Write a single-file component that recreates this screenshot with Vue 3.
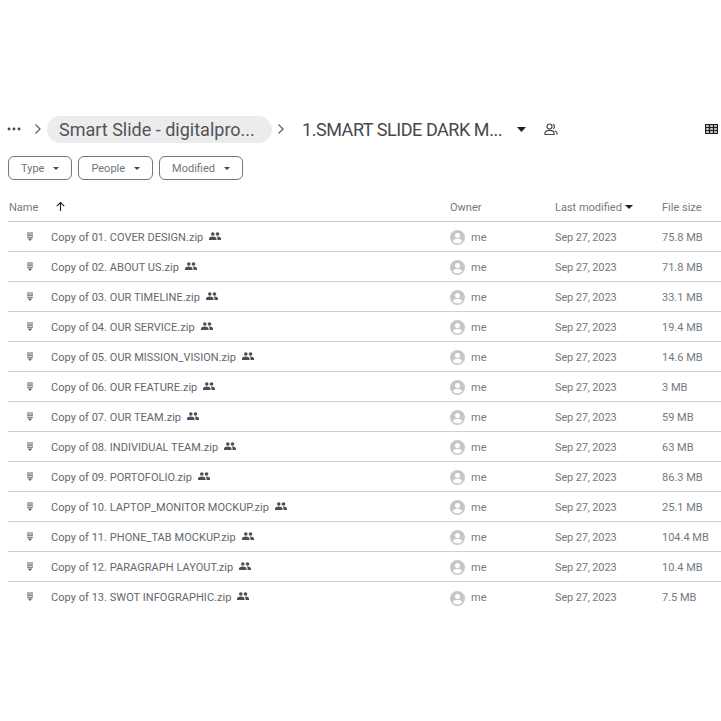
<script setup>
const rows = [
  ['Copy of 01. COVER DESIGN.zip', '75.8 MB'],
  ['Copy of 02. ABOUT US.zip', '71.8 MB'],
  ['Copy of 03. OUR TIMELINE.zip', '33.1 MB'],
  ['Copy of 04. OUR SERVICE.zip', '19.4 MB'],
  ['Copy of 05. OUR MISSION_VISION.zip', '14.6 MB'],
  ['Copy of 06. OUR FEATURE.zip', '3 MB'],
  ['Copy of 07. OUR TEAM.zip', '59 MB'],
  ['Copy of 08. INDIVIDUAL TEAM.zip', '63 MB'],
  ['Copy of 09. PORTOFOLIO.zip', '86.3 MB'],
  ['Copy of 10. LAPTOP_MONITOR MOCKUP.zip', '25.1 MB'],
  ['Copy of 11. PHONE_TAB MOCKUP.zip', '104.4 MB'],
  ['Copy of 12. PARAGRAPH LAYOUT.zip', '10.4 MB'],
  ['Copy of 13. SWOT INFOGRAPHIC.zip', '7.5 MB'],
]
const filters = ['Type', 'People', 'Modified']
</script>

<template>
  <div class="page">
    <div class="crumbs">
      <svg class="dots" width="14" height="4" viewBox="0 0 14 4"><circle cx="2" cy="2" r="1.4"/><circle cx="7" cy="2" r="1.4"/><circle cx="12" cy="2" r="1.4"/></svg>
      <svg class="chev first" width="8" height="12" viewBox="0 0 8 12"><path d="M1.5 1.5 6 6l-4.500 4.500"/></svg>
      <span class="pill">Smart Slide - digitalpro...</span>
      <svg class="chev second" width="8" height="12" viewBox="0 0 8 12"><path d="M1.5 1.5 6 6l-4.500 4.500"/></svg>
      <span class="current">1.SMART SLIDE DARK M...</span>
      <svg class="caret big" width="9" height="5" viewBox="0 0 9 5"><path d="M0 0h9L4.500 5z"/></svg>
      <svg class="folder-share" width="14" height="13" viewBox="0 0 14 13"><circle cx="5.500" cy="3.500" r="2.500"/><path d="M1 11.500V10c0-1.600 2-2.700 4.500-2.700S10 8.400 10 10v1.500z"/><path d="M9 1.200a2.500 2.500 0 0 1 0 4.600M11 7.800c1.200.5 2 1.200 2 2.200v1.500"/></svg>
      <svg class="grid-view" width="13" height="10" viewBox="0 0 13 10"><path d="M.5.500h12v9H.5zM.5 3.500h12M.5 6.500h12M4.500.5v9M8.500.5v9"/></svg>
    </div>

    <div class="filters">
      <button v-for="f in filters" :key="f" class="filter">
        <span>{{ f }}</span>
        <svg width="6" height="3" viewBox="0 0 6 3"><path d="M0 0h6L3 3z"/></svg>
      </button>
    </div>

    <div class="row head">
      <div class="name-head">
        <span>Name</span>
        <svg width="11" height="11" viewBox="0 0 11 11"><path d="M5.500 10V1.500M1.800 5.200 5.500 1.500l3.700 3.700"/></svg>
      </div>
      <span>Owner</span>
      <span class="sort">Last modified
        <svg width="8" height="4" viewBox="0 0 8 4"><path d="M0 0h8L4 4z"/></svg>
      </span>
      <span>File size</span>
    </div>

    <div v-for="r in rows" :key="r[0]" class="row item">
      <div class="name-cell">
        <svg class="zip" width="6" height="9" viewBox="0 0 6 9"><path d="M0 .5h6v1.100H0zM0 2.600h6v1.100H0zM0 4.700h6v1.100H0zM.6 6.600h4.800L3 9z"/></svg>
        <span class="fname">{{ r[0] }}</span>
        <svg class="shared" width="12" height="8" viewBox="0 0 12 8"><circle cx="3.800" cy="2" r="1.800"/><circle cx="8.500" cy="2" r="1.800"/><path d="M0 8V6.500C0 5.200 2 4.500 3.800 4.500s3.700.7 3.700 2V8zM8.500 8V6.300c0-.7-.3-1.300-.8-1.700 2-.3 4.300.5 4.300 1.900V8z"/></svg>
      </div>
      <div class="owner">
        <svg width="15" height="15" viewBox="0 0 15 15"><circle class="disc" cx="7.500" cy="7.500" r="7.500"/><circle class="face" cx="7.500" cy="5.600" r="2.500"/><path class="face" d="M2.800 11.200c.8-1.600 2.800-2.400 4.700-2.400s3.900.8 4.700 2.400a6 6 0 0 1-9.400 0z"/></svg>
        <span>me</span>
      </div>
      <span class="date">Sep 27, 2023</span>
      <span>{{ r[1] }}</span>
    </div>
  </div>
</template>

<style scoped>
.page {
  width: 721px;
  height: 721px;
  box-sizing: border-box;
  padding-top: 114px;
  background: #fff;
  font-family: Roboto, "Liberation Sans", sans-serif;
  color: #5f6368;
  overflow: hidden;
}
.crumbs {
  display: flex;
  align-items: center;
  height: 30px;
  padding-left: 7px;
}
.dots { fill: #444746; }
.chev { fill: none; stroke: #5f6368; stroke-width: 1.300; }
.chev.first { margin-left: 13px; }
.chev.second { margin-left: 5px; }
.pill {
  margin-left: 5px;
  height: 27px;
  width: 225px;
  box-sizing: border-box;
  padding-left: 12px;
  border-radius: 14px;
  background: #ececec;
  font-size: 18px;
  line-height: 27px;
  color: #50545a;
  white-space: nowrap;
}
.current {
  margin-left: 17px;
  font-size: 18px;
  letter-spacing: -.45px;
  color: #45494d;
  white-space: nowrap;
}
.caret { fill: #1f1f1f; }
.caret.big { margin-left: 15px; }
.folder-share { margin-left: 18px; fill: none; stroke: #444746; stroke-width: 1.200; }
.grid-view { margin-left: auto; margin-right: 3px; fill: none; stroke: #1f1f1f; stroke-width: 1.300; }
.filters {
  display: flex;
  gap: 6px;
  margin-top: 12px;
  padding-left: 8px;
}
.filter {
  display: flex;
  align-items: center;
  height: 24px;
  box-sizing: border-box;
  padding: 0 12px;
  gap: 9px;
  border: 1px solid #747775;
  border-radius: 6px;
  background: #fff;
  font: 11px Roboto, "Liberation Sans", sans-serif;
  color: #70757a;
}
.filter svg { fill: #444746; }
.row {
  display: grid;
  grid-template-columns: 442px 105px 107px 1fr;
  align-items: center;
  box-sizing: border-box;
  height: 30px;
  padding-top: 1px;
  margin-left: 8px;
  font-size: 11px;
  color: #75797e;
}
.head {
  margin-top: 12px;
  border-bottom: 1px solid #c7c7c7;
}
.name-head { display: flex; align-items: center; gap: 17px; padding-left: 1px; }
.name-head svg { margin-top: -2px; fill: none; stroke: #1f1f1f; stroke-width: 1.100; }
.sort { display: flex; align-items: center; gap: 3px; }
.sort svg { fill: #1f1f1f; }
.item {
  border-bottom: 1px solid #cfcfcf;
}
.item:last-child { border-bottom: none; }
.name-cell { display: flex; align-items: center; }
.zip { margin-left: 19px; margin-top: -2px; fill: #5f6368; }
.fname { margin-left: 18px; white-space: nowrap; letter-spacing: .04px; color: #63676c; }
.shared { margin-left: 6px; margin-top: -3px; fill: #4b4f53; }
.owner { display: flex; align-items: center; gap: 6px; }
.owner svg { margin-top: 1px; }
.date { letter-spacing: -.15px; }
.disc { fill: #c4c7c5; }
.face { fill: #fff; }
</style>
